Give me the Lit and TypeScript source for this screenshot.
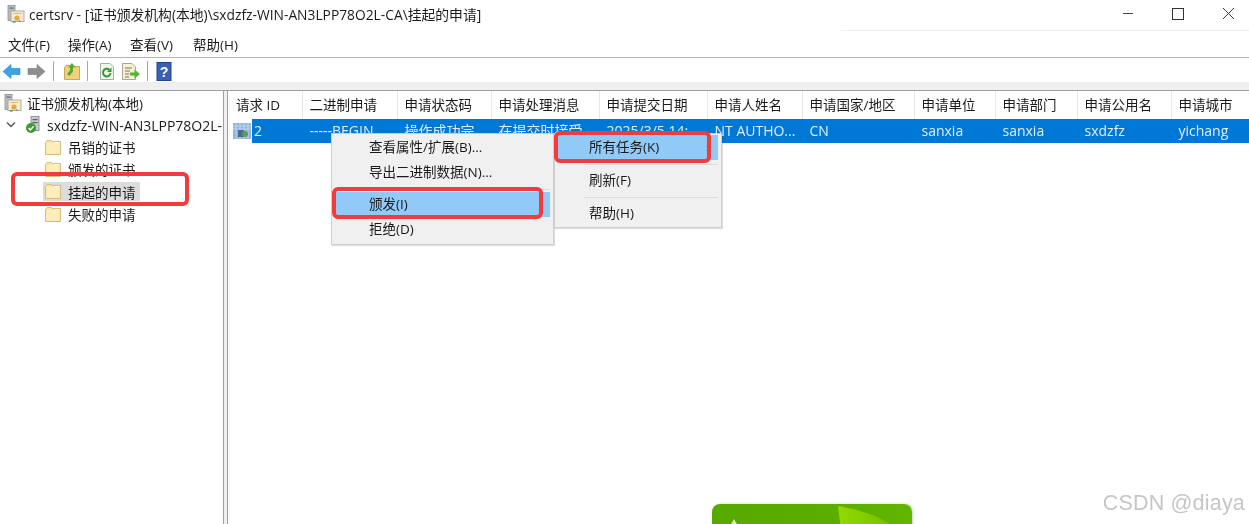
import { LitElement, html, css, svg } from 'lit';
import { customElement } from 'lit/decorators.js';

const certIcon = (size: number) => html`
  <svg width=${size} height=${size} viewBox="0 0 18 18">
    <rect x="1" y="0.5" width="7" height="15" fill="#b9bec4" stroke="#7d848c" stroke-width=".7" />
    <rect x="2.5" y="2.5" width="4" height="1.2" fill="#667" />
    <rect x="4" y="6" width="13" height="10.5" fill="#f6ecd2" stroke="#a59a7c" stroke-width=".8" />
    <rect x="6.5" y="8" width="8" height="1" fill="#d9b878" />
    <circle cx="10" cy="13" r="2.6" fill="#e8a93a" />
    <path d="M8 15.5l-1 2.3 2-.6zM11.5 15.5l2 2.3-.4-2.6z" fill="#3d8ad6" />
    <path d="M6.5 15.5l2 1.8-3 .5z" fill="#5aa83a" />
  </svg>
`;

const folderIcon = html`
  <svg width="16" height="15" viewBox="0 0 16 15">
    <path d="M.5 2.5V14.500H15.500V1.500H7.500L6 .5H2z" fill="#fbe6a3" stroke="#d5bd7c" />
    <rect x="1.500" y="3" width="13" height="10.500" fill="#fdeeb9" />
    <rect x="10" y="2" width="4" height="1" fill="#fff" />
  </svg>
`;

const serverIcon = html`
  <svg width="17" height="18" viewBox="0 0 17 18">
    <rect x="6" y=".5" width="8" height="14" fill="#c6cbd0" stroke="#7c838a" stroke-width=".8" />
    <rect x="7.5" y="3" width="5" height="1.2" fill="#596068" />
    <rect x="7.5" y="6" width="5" height="1.2" fill="#596068" />
    <circle cx="6" cy="12" r="5" fill="#3f9a2e" />
    <path d="M3.6 12l1.8 1.9 3.2-3.6" fill="none" stroke="#fff" stroke-width="1.4" />
  </svg>
`;

const toolbarIcons = {
  back: svg`<path d="M1 9.5L9 2.5V6.5H18V12.5H9V16.5z" fill="#3ba4e6" stroke="#2a86cc" stroke-width=".6" />`,
  forward: svg`<path d="M18 9.5L10 2.5V6.5H1V12.5H10V16.5z" fill="#8d8f90" stroke="#77797a" stroke-width=".6" />`,
  up: svg`
    <path d="M1.5 5.5V17.5H16.5V4.5H8L6.5 3.5H3z" fill="#f2d07c" stroke="#c7a75a" />
    <path d="M4 12L7 8.5V5.5H5L9 1l3.5 4.5H10V9.5L6.5 14z" fill="#57a92f" />
  `,
  refresh: svg`
    <path d="M2.5 1.5H12L15.5 5V17.5H2.5z" fill="#f3f4ee" stroke="#a9ad9f" />
    <path d="M12.5 11a3.8 3.8 0 1 1-1.2-3.2" fill="none" stroke="#2e9a36" stroke-width="2" />
    <path d="M13.5 5.5V10H9z" fill="#2e9a36" />
  `,
  exportList: svg`
    <path d="M1.5 1.5H11L14.5 5V17.5H1.5z" fill="#f6f0d6" stroke="#aca68c" />
    <path d="M4 6H11M4 9H9M4 12H8M4 15H8" stroke="#77735f" stroke-width="1" />
    <path d="M9 10.5H13.5V7.5L19 12l-5.500 4.500V13.500H9z" fill="#54b52f" />
  `,
  help: svg`
    <rect x="1" y=".5" width="14" height="18" fill="#3a5fb5" stroke="#25418a" />
    <text x="8" y="15" text-anchor="middle" font-size="14" font-weight="700" font-family="Liberation Sans, sans-serif" fill="#fff">?</text>
  `,
};

const toolIcon = (key: keyof typeof toolbarIcons, width = 19) => html`
  <svg class="tool-icon" width=${width} height="19" viewBox="0 0 ${width} 19">${toolbarIcons[key]}</svg>
`;

const columns = [
  { title: '请求 ID', value: '2', width: 75 },
  { title: '二进制申请', value: '-----BEGIN...', width: 95 },
  { title: '申请状态码', value: '操作成功完', width: 94 },
  { title: '申请处理消息', value: '在提交时接受', width: 108 },
  { title: '申请提交日期', value: '2025/3/5 14:', width: 108 },
  { title: '申请人姓名', value: 'NT AUTHO...', width: 95 },
  { title: '申请国家/地区', value: 'CN', width: 112 },
  { title: '申请单位', value: 'sanxia', width: 81 },
  { title: '申请部门', value: 'sanxia', width: 82 },
  { title: '申请公用名', value: 'sxdzfz', width: 94 },
  { title: '申请城市', value: 'yichang', width: 78 },
];

const treeFolders = [
  { label: '吊销的证书' },
  { label: '颁发的证书' },
  { label: '挂起的申请', selected: true },
  { label: '失败的申请' },
];

@customElement('app-root')
export class AppRoot extends LitElement {
  static styles = css`
    :host {
      display: block;
      position: relative;
      width: 1249px;
      height: 524px;
      overflow: hidden;
      background: #fff;
      color: #1a1a1a;
      font-family: 'Open Sans', 'Noto Sans CJK SC', sans-serif;
      font-size: 13.5px;
    }

    .frame {
      height: 100%;
      display: flex;
      flex-direction: column;
      filter: blur(0.35px);
    }

    .titlebar {
      height: 31px;
      flex: none;
      display: flex;
      align-items: center;
      box-sizing: border-box;
      padding: 0 0 3px 7px;
      gap: 4px;
      font-size: 13.8px;
      position: relative;
    }

    .titlebar .faint {
      position: absolute;
      left: 841px;
      right: 0;
      bottom: 0;
      height: 1px;
      background: #efefef;
    }

    .window-buttons {
      margin-left: auto;
      display: flex;
    }

    .window-buttons svg {
      display: block;
      width: 51px;
      height: 28px;
      margin-top: 2px;
    }

    .menubar {
      height: 25px;
      flex: none;
      display: grid;
      grid-template-columns: 60px 62px 63px auto;
      align-items: center;
      padding: 0 0 1px 8px;
      border-bottom: 1px solid #b4b4b4;
    }

    .toolbar {
      height: 22px;
      flex: none;
      display: flex;
      align-items: center;
      padding: 2px 0 0 2px;
    }

    .tool-icon {
      display: block;
      flex: none;
    }

    .sep {
      width: 1px;
      height: 20px;
      background: #a8a8a8;
      flex: none;
    }

    .space-4 { width: 4px; flex: none; }
    .space-5 { width: 5px; flex: none; }
    .space-6 { width: 6px; flex: none; }
    .space-7 { width: 7px; flex: none; }
    .space-8 { width: 8px; flex: none; }
    .space-9 { width: 9px; flex: none; }
    .space-10 { width: 10px; flex: none; }

    .band {
      height: 9px;
      flex: none;
      background: #efefef;
      border-bottom: 1px solid #9f9f9f;
      box-sizing: border-box;
    }

    .panes {
      flex: 1;
      display: flex;
      min-height: 0;
      background: #efefef;
    }

    .tree {
      width: 223px;
      flex: none;
      background: #fff;
      border-right: 1px solid #9f9f9f;
      white-space: nowrap;
      overflow: hidden;
    }

    .node {
      display: flex;
      align-items: center;
    }

    .node.root {
      height: 23px;
      padding-left: 4px;
      gap: 5px;
    }

    .node.server {
      height: 22px;
      padding-left: 6px;
      font-size: 14px;
    }

    .node.server .chevron {
      width: 10px;
      margin-right: 9px;
    }

    .node.server .name {
      margin-left: 5px;
    }

    .node.folder {
      padding-left: 43px;
      height: 22.3px;
    }

    .entry {
      display: flex;
      align-items: center;
      height: 19px;
      padding: 0 4px 0 2px;
    }

    .entry.selected {
      background: #dcdcdc;
    }

    .entry .label {
      margin-left: 7px;
    }

    .list {
      margin-left: 3px;
      flex: 1;
      background: #fff;
      border-left: 1px solid #9f9f9f;
      min-width: 0;
      overflow: hidden;
    }

    .head,
    .row {
      display: flex;
      white-space: nowrap;
    }

    .head {
      height: 28px;
    }

    .head span {
      flex: none;
      box-sizing: border-box;
      padding-left: 6.5px;
      border-right: 1px solid #e6e6e6;
      line-height: 28px;
    }

    .head span:first-child {
      padding-left: 8px;
    }

    .row {
      height: 24px;
      align-items: center;
    }

    .row .row-icon {
      position: absolute;
      left: 233px;
      top: 123px;
    }

    .row span {
      flex: none;
      box-sizing: border-box;
      padding-left: 6.5px;
      height: 24px;
      line-height: 24px;
      background: #0078d7;
      color: #e4eefa;
      font-size: 14px;
      overflow: hidden;
    }

    .row span:first-of-type {
      padding-left: 26px;
      background: linear-gradient(to right, transparent 24px, #0078d7 24px);
    }

    .menu {
      position: absolute;
      box-sizing: border-box;
      top: 133px;
      background: #f0f0f0;
      border: 1px solid #cfcfcf;
      box-shadow: 1px 1px 1px rgba(0, 0, 0, 0.12);
      white-space: nowrap;
    }

    .menu.tasks {
      left: 331px;
      width: 223px;
      height: 112px;
      padding: 1px 3px 0 4px;
    }

    .menu.actions {
      left: 554px;
      width: 168px;
      height: 95px;
      padding: 1px 3px 0 3px;
    }

    .item {
      height: 25px;
      line-height: 25px;
      padding-left: 33px;
      position: relative;
    }

    .menu.actions .item {
      padding-left: 31px;
    }

    .item.hot {
      background: #91c9f7;
    }

    .item .arrow {
      position: absolute;
      right: 8px;
      top: 0;
    }

    .menu hr {
      border: 0;
      height: 1px;
      background: #dcdcdc;
      margin: 4px 0 2px 29px;
    }

    .menu.actions hr {
      margin: 4px 0 3px 26px;
    }

    .mark {
      position: absolute;
      box-sizing: border-box;
      border: 4px solid #f23c3c;
      border-radius: 6px;
    }

    .mark.tree-mark {
      left: 11px;
      top: 172px;
      width: 178px;
      height: 34px;
    }

    .mark.issue-mark {
      left: 332px;
      top: 187px;
      width: 211px;
      height: 32px;
    }

    .mark.all-mark {
      left: 554px;
      top: 131px;
      width: 157px;
      height: 32px;
    }

    .promo {
      position: absolute;
      left: 712px;
      top: 504px;
      width: 200px;
      height: 30px;
      border-radius: 8px 8px 0 0;
      background: linear-gradient(to right, #57a900, #5bad00 60%, #62b500);
      box-shadow: 1px 0 3px rgba(0, 0, 0, 0.2);
      overflow: hidden;
    }

    .promo svg {
      display: block;
    }

    .watermark {
      position: absolute;
      right: 4px;
      top: 491px;
      font-family: 'Liberation Sans', sans-serif;
      font-size: 21.5px;
      color: #c6c6c6;
      letter-spacing: 0.2px;
    }
  `;

  render() {
    return html`
      <div class="frame">
        <div class="titlebar">
          ${certIcon(18)}
          <span>certsrv - [证书颁发机构(本地)\\sxdzfz-WIN-AN3LPP78O2L-CA\\挂起的申请]</span>
          <div class="faint"></div>
          <div class="window-buttons">
            <svg viewBox="0 0 51 28"><path d="M27 12.500H37" stroke="#444" /></svg>
            <svg viewBox="0 0 51 28"><rect x="25.500" y="7.500" width="11" height="11" fill="none" stroke="#333" /></svg>
            <svg viewBox="0 0 51 28"><path d="M25 7L36 18M36 7L25 18" stroke="#333" /></svg>
          </div>
        </div>
        <div class="menubar">
          <span>文件(F)</span><span>操作(A)</span><span>查看(V)</span><span>帮助(H)</span>
        </div>
        <div class="toolbar">
          ${toolIcon('back')}
          <div class="space-6"></div>
          ${toolIcon('forward')}
          <div class="space-7"></div>
          <div class="sep"></div>
          <div class="space-9"></div>
          ${toolIcon('up')}
          <div class="space-5"></div>
          <div class="sep"></div>
          <div class="space-10"></div>
          ${toolIcon('refresh')}
          <div class="space-4"></div>
          ${toolIcon('exportList')}
          <div class="space-7"></div>
          <div class="sep"></div>
          <div class="space-8"></div>
          ${toolIcon('help', 16)}
        </div>
        <div class="band"></div>
        <div class="panes">
          <div class="tree">
            <div class="node root">${certIcon(18)}<span>证书颁发机构(本地)</span></div>
            <div class="node server">
              <svg class="chevron" width="10" height="8" viewBox="0 0 10 8"><path d="M1 1.500L5 5.500L9 1.500" fill="none" stroke="#555" stroke-width="1.400" /></svg>
              ${serverIcon}
              <span class="name">sxdzfz-WIN-AN3LPP78O2L-</span>
            </div>
            ${treeFolders.map(
              (f) => html`
                <div class="node folder">
                  <div class="entry ${f.selected ? 'selected' : ''}">
                    ${folderIcon}<span class="label">${f.label}</span>
                  </div>
                </div>
              `,
            )}
          </div>
          <div class="list">
            <div class="head">
              ${columns.map((c) => html`<span style="width:${c.width}px">${c.title}</span>`)}
            </div>
            <div class="row">
              <svg class="row-icon" width="18" height="16" viewBox="0 0 18 16">
                <rect width="18" height="16" fill="#8eb6de" />
                <path d="M0 3H18M0 6H18M3 0V16M7 0V16M11 0V16M15 0V16" stroke="#cfe0f2" stroke-width=".7" />
                <path d="M5 7h6v7H5z" fill="#4a6b8f" />
                <circle cx="12" cy="11" r="3" fill="#5f9a5a" />
              </svg>
              ${columns.map((c) => html`<span style="width:${c.width}px">${c.value}</span>`)}
            </div>
          </div>
        </div>
      </div>

      <div class="promo">
        <svg width="200" height="30" viewBox="0 0 200 30">
          <defs>
            <linearGradient id="leaf" x1="0" y1="0" x2="1" y2="0">
              <stop offset="0" stop-color="#93da00" />
              <stop offset="1" stop-color="#6cbc00" />
            </linearGradient>
          </defs>
          <path d="M126 2C150 6 175 14 190 30H130C128 20 127 10 126 2z" fill="url(#leaf)" />
          <path d="M22 15l5 9h-10z" fill="#d8efb0" />
        </svg>
      </div>

      <div class="menu tasks">
        <div class="item">查看属性/扩展(B)...</div>
        <div class="item">导出二进制数据(N)...</div>
        <hr />
        <div class="item hot">颁发(I)</div>
        <div class="item">拒绝(D)</div>
      </div>
      <div class="menu actions">
        <div class="item hot">所有任务(K)<span class="arrow">›</span></div>
        <hr />
        <div class="item">刷新(F)</div>
        <hr />
        <div class="item">帮助(H)</div>
      </div>

      <div class="mark tree-mark"></div>
      <div class="mark issue-mark"></div>
      <div class="mark all-mark"></div>
      <div class="watermark">CSDN @diaya</div>
    `;
  }
}
